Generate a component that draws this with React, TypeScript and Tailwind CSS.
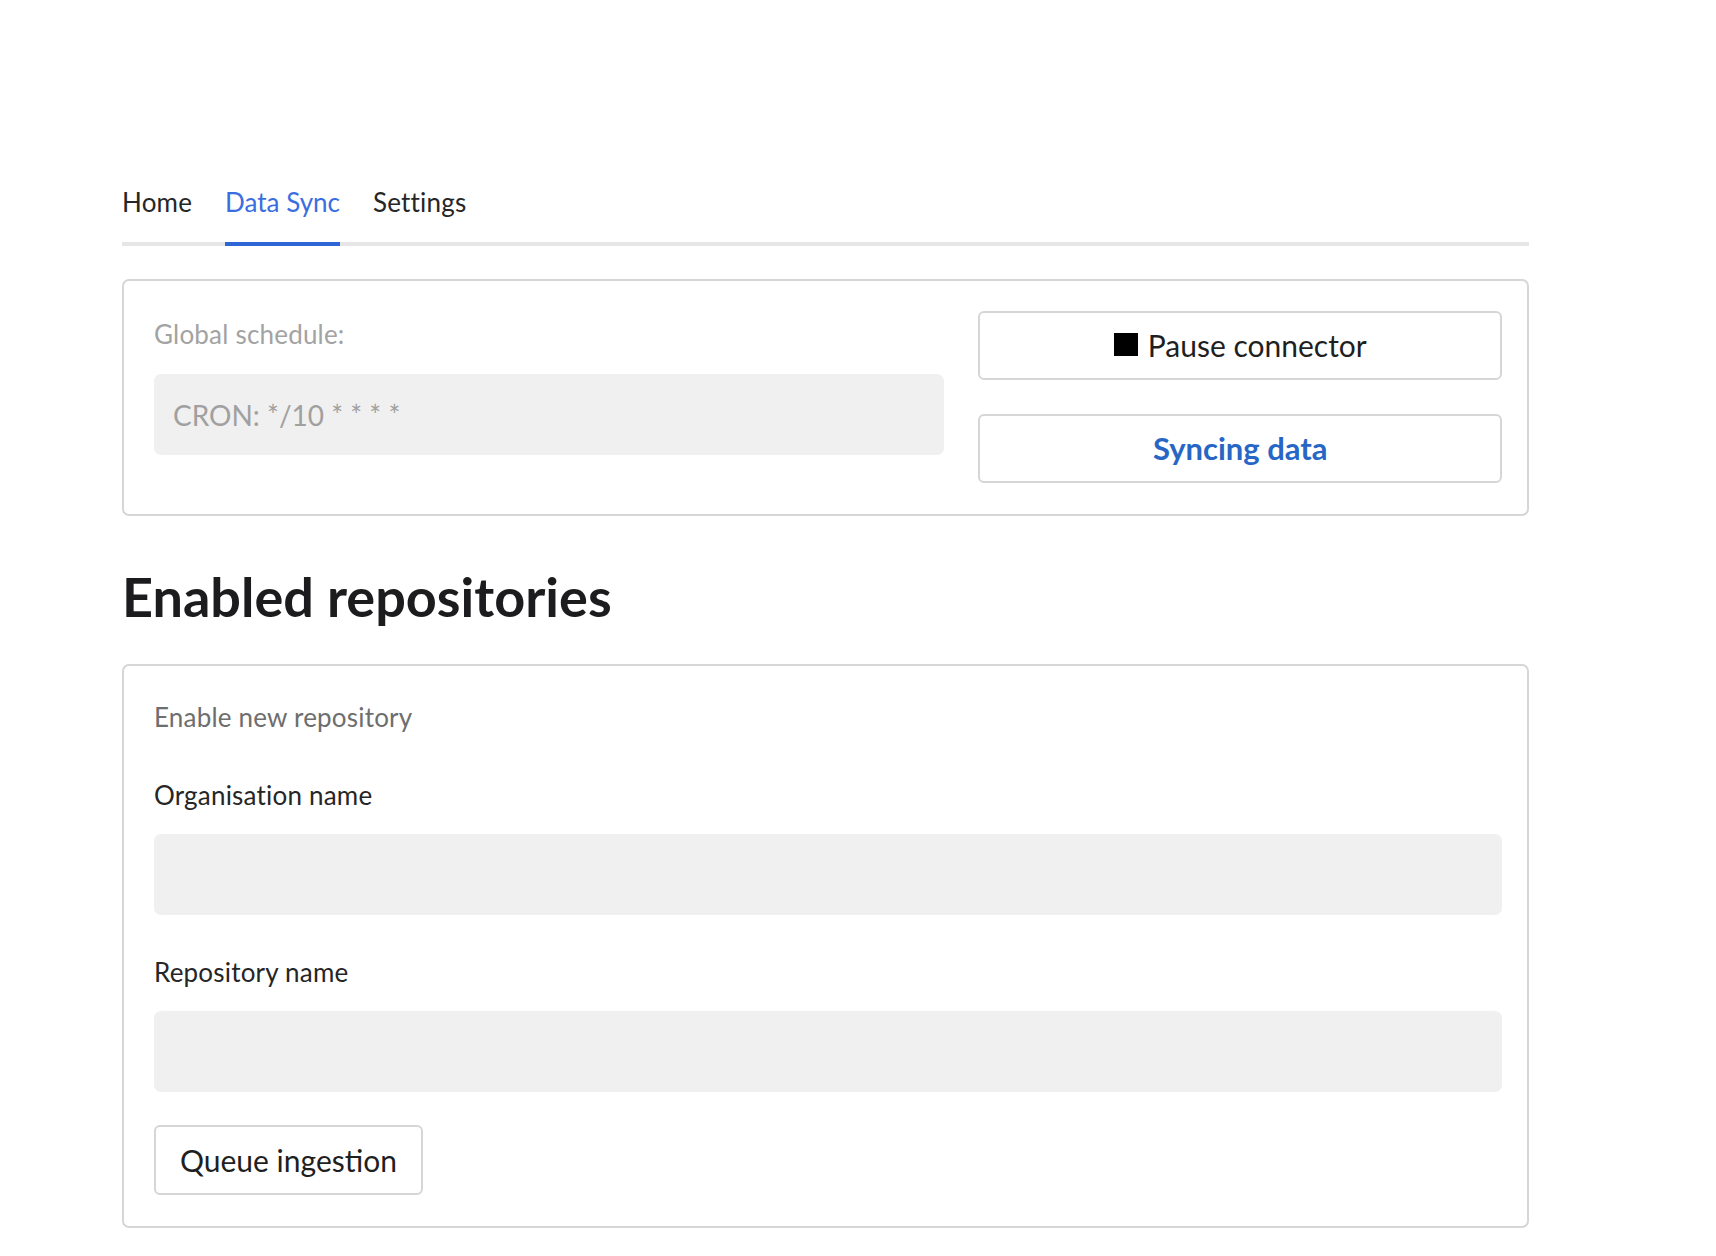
const tabs = ['Home', 'Data Sync', 'Settings']

function Tabs({ active }: { active: string }) {
  return (
    <nav className="flex gap-[33px] border-b-4 border-[#e6e6e6]">
      {tabs.map((tab) =>
        tab === active ? (
          <span
            key={tab}
            className="-mb-[4px] border-b-4 border-[#2f66d6] pb-[20px] text-[26px] leading-[40px] text-[#3a6ee0]"
          >
            {tab}
          </span>
        ) : (
          <span key={tab} className="pb-[20px] text-[26px] leading-[40px] tracking-[0.2px] text-[#262626]">
            {tab}
          </span>
        ),
      )}
    </nav>
  )
}

function FieldLabel({ children }: { children: string }) {
  return <p className="text-[26px] leading-[34px] tracking-[0.2px] text-[#262626]">{children}</p>
}

function TextInput() {
  return <div className="h-[81px] w-full rounded-[7px] bg-[#f0f0f0]" />
}

export default function App() {
  return (
    <div className="min-h-screen bg-white font-['Lato',sans-serif]">
      <div className="ml-[122px] w-[1407px] pt-[182px]">
        <Tabs active="Data Sync" />

        <section className="mt-[33px] grid grid-cols-[1.51fr_1fr] gap-[34px] rounded-[7px] border-2 border-[#d6d6d6] pb-[31px] pl-[30px] pr-[25px] pt-[30px]">
          <div>
            <p className="mt-[6px] text-[26px] leading-[34px] tracking-[0.2px] text-[#a3a3a3]">Global schedule:</p>
            <div className="mt-[23px] flex h-[81px] items-center rounded-[7px] bg-[#f0f0f0] px-[19px] text-[28px] text-[#a0a0a0]">
              CRON: */10 * * * *
            </div>
          </div>
          <div className="flex flex-col gap-[34px]">
            <button
              type="button"
              className="flex h-[69px] items-center justify-center gap-[10px] rounded-[6px] border-2 border-[#d6d6d6] bg-white text-[30px] text-[#1f1f1f]"
            >
              <span className="-mt-[3px] h-[23px] w-[24px] bg-black" />
              Pause connector
            </button>
            <button
              type="button"
              className="flex h-[69px] items-center justify-center rounded-[6px] border-2 border-[#d6d6d6] bg-white text-[31px] font-bold text-[#2766c5]"
            >
              Syncing data
            </button>
          </div>
        </section>

        <h2 className="mt-[49px] text-[54px] font-bold leading-[64px] text-[#1c1c1e]">Enabled repositories</h2>

        <section className="mt-[35px] rounded-[7px] border-2 border-[#d6d6d6] pb-[31px] pl-[30px] pr-[25px] pt-[34px]">
          <p className="text-[26px] leading-[34px] tracking-[0.2px] text-[#6e6e6e]">Enable new repository</p>

          <div className="mt-[44px]">
            <FieldLabel>Organisation name</FieldLabel>
            <div className="mt-[22px]">
              <TextInput />
            </div>
          </div>

          <div className="mt-[40px]">
            <FieldLabel>Repository name</FieldLabel>
            <div className="mt-[22px]">
              <TextInput />
            </div>
          </div>

          <button
            type="button"
            className="mt-[33px] flex h-[70px] items-center rounded-[6px] border-2 border-[#d6d6d6] bg-white px-[24px] text-[30px] text-[#1f1f1f]"
          >
            Queue ingestion
          </button>
        </section>
      </div>
    </div>
  )
}
